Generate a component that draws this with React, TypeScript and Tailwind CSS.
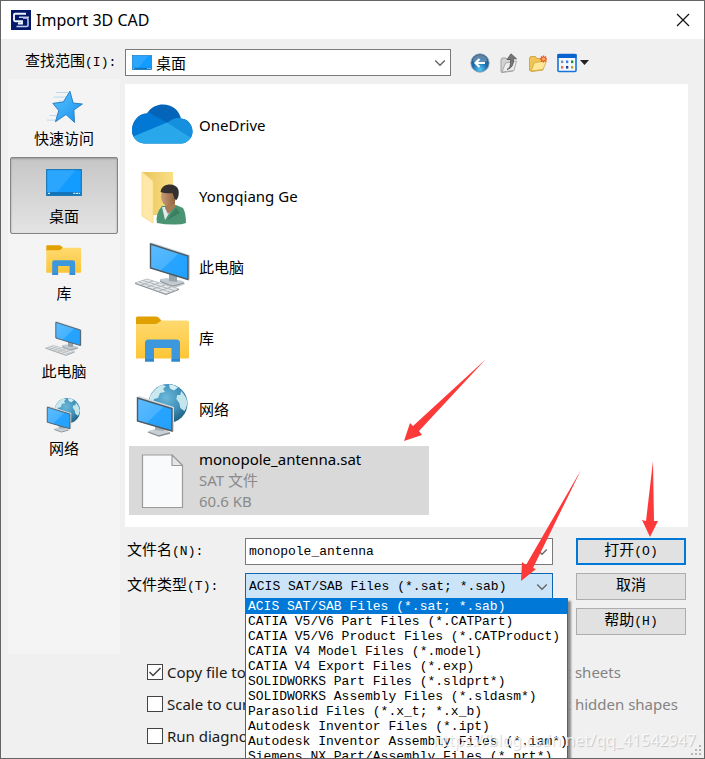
import { useState } from "react";
import type { ReactNode } from "react";

const UI = "font-['Noto_Sans','Noto_Sans_CJK_SC',sans-serif]";
const MONO = "font-['Liberation_Mono','Noto_Sans_CJK_SC',monospace]";

type IconProps = { className?: string };

function Screen({ points, id }: { points: string; id: string }) {
  return (
    <>
      <defs>
        <linearGradient id={id} x1="0" y1="0" x2="1" y2="1">
          <stop offset="0" stopColor="#5cbcff" />
          <stop offset="0.5" stopColor="#47b2ff" />
          <stop offset="0.52" stopColor="#26a4ff" />
          <stop offset="1" stopColor="#22a0fb" />
        </linearGradient>
      </defs>
      <polygon points={points} fill={`url(#${id})`} stroke="#4d5a63" strokeWidth="1.4" />
    </>
  );
}

function StarIcon({ className }: IconProps) {
  return (
    <svg viewBox="0 0 64 64" className={className} aria-hidden="true">
      <defs>
        <linearGradient id="star" x1="0" y1="0" x2="1" y2="1">
          <stop offset="0" stopColor="#5cc4ff" />
          <stop offset="1" stopColor="#1590ee" />
        </linearGradient>
      </defs>
      <path d="M20 13h18M16 20h20M24 26h10M10 48h12M6 55h14" stroke="#7fc0ea" strokeWidth="1.300" opacity=".6" />
      <path
        d="M41 11l5 18 14 1.500-13 9 1 19-13-12-16 11 5-17-9-11 16-2z"
        fill="url(#star)"
        stroke="#2a7fc0"
        strokeWidth="1.500"
        strokeLinejoin="round"
      />
    </svg>
  );
}

function DesktopIcon({ className }: IconProps) {
  return (
    <svg viewBox="5 12 54 41" className={className} aria-hidden="true" preserveAspectRatio="none">
      <rect x="6" y="13" width="52" height="39" fill="#139cff" stroke="#1878b8" strokeWidth="1.800" />
      <path d="M7 14h42L22 47H7z" fill="#3aaeff" opacity=".6" />
      <rect x="7" y="47" width="50" height="4.500" fill="#1173b8" />
      <path d="M8 49h3M46 49h3M50 49h3M54 49h2" stroke="#d8f0ff" strokeWidth="2" />
    </svg>
  );
}

function LibraryIcon({ className }: IconProps) {
  return (
    <svg viewBox="0 0 64 64" className={className} aria-hidden="true">
      <defs>
        <linearGradient id="lib" x1="0" y1="0" x2="0" y2="1">
          <stop offset="0" stopColor="#ffda70" />
          <stop offset="1" stopColor="#fdc536" />
        </linearGradient>
      </defs>
      <path d="M5 11q0-1.500 1.500-1.500h18q2 0 3 1l3 3-4 5H5z" fill="#e0a000" />
      <path d="M5 17h19q2 0 3-1l2-1.500q1-1 3-1h24q2 0 2 2V50q0 1.500-1.500 1.500h-51Q5 51.500 5 50z" fill="url(#lib)" />
      <path d="M14 54.500V36q0-3.500 3.500-3.500h28Q49 32.500 49 36v18.500h-8.500V41H23v13.500z" fill="#3d97dd" />
      <path d="M14 52h9v2.500h-9zM40.500 52H49v2.500h-8.500z" fill="#2f86ca" />
    </svg>
  );
}

function ComputerIcon({ className }: IconProps) {
  return (
    <svg viewBox="0 0 64 64" className={className} aria-hidden="true">
      <path d="M29 43l7-1 16 3 2 3-10 4q-4 0-7-2l-8-4z" fill="#c3cbd1" />
      <path d="M29 45l9 4q4 1.500 8 0l7-2" stroke="#8e979e" strokeWidth="1.200" fill="none" />
      <path d="M38 37l8 3v6l-8-1z" fill="#9aa4ab" />
      <path d="M19 7l2-.5L59 19v24l-1.500 1z" fill="#cdd5da" />
      <Screen id="pc" points="19.500,8 57,20 57,43.500 19.500,32" />
      <path d="M4 47l12-4 32 10-13 5z" fill="#e7eaec" stroke="#b4babe" strokeWidth=".9" />
      <path d="M8 46l31 10M12 44.500l31 10M10 49l12-4M16 51l12-4M22 53l12-4M28 55l12-4" stroke="#a9b0b5" strokeWidth=".9" />
      <path d="M4 47.500L35 58.500l13-5" stroke="#8c9499" strokeWidth="1" fill="none" />
    </svg>
  );
}

function NetworkIcon({ className }: IconProps) {
  return (
    <svg viewBox="0 0 64 64" className={className} aria-hidden="true">
      <defs>
        <radialGradient id="globe" cx=".45" cy=".35" r=".65">
          <stop offset="0" stopColor="#6cb8da" />
          <stop offset=".6" stopColor="#3f8fb8" />
          <stop offset="1" stopColor="#1f6384" />
        </radialGradient>
      </defs>
      <circle cx="37" cy="25.500" r="19.500" fill="url(#globe)" />
      <path d="M19 18q5-8 12-11l4 1-3 3 2 3-5 1-2 5-4 1-1 4-4-1z" fill="#c9e9ee" />
      <path d="M38 6.500q5 0 9 3l-4 3-4-2z" fill="#d5eef2" />
      <path d="M50 13q6 6 6.300 12-1 6-3 8l-4-3-1-5-3-4 1-4 3 0z" fill="#c3e6ec" />
      <path d="M28 50l-11 3 3 3 9 2 10-3-4-4z" fill="#c9d0d5" />
      <path d="M17 54l11 4 11-3" stroke="#858f96" strokeWidth="1.300" fill="none" />
      <path d="M24 46l9 3v4l-9-1z" fill="#a3adb4" />
      <path d="M6 19l2-1 35 11v24l-1.500 1z" fill="#d5dce0" />
      <Screen id="net" points="6.500,20 41,30.500 41,53 6.500,43" />
    </svg>
  );
}

function OneDriveIcon({ className }: IconProps) {
  return (
    <svg viewBox="0 0 64 64" className={className} aria-hidden="true">
      <defs>
        <clipPath id="cloud">
          <path d="M14 49.500A13 13 0 0 1 1 36.500C1 27 8 19.500 16 19.500C20 13 26 10.500 32 10.500C41 10.500 48 16 50 24.500C57 25 61.500 31 61.500 37.500A12 12 0 0 1 50 49.500Z" />
        </clipPath>
      </defs>
      <g clipPath="url(#cloud)">
        <rect width="64" height="64" fill="#0364b8" />
        <path d="M0 18h17l20 11L2 44H0z" fill="#0078d4" />
        <path d="M36 29q7-6 15-5l13 0v24z" fill="#1490df" />
        <path d="M0 43.500L36 28.500 60 44v8H0z" fill="#28a8ea" />
      </g>
    </svg>
  );
}

function UserFolderIcon({ className }: IconProps) {
  return (
    <svg viewBox="0 0 64 64" className={className} aria-hidden="true">
      <defs>
        <linearGradient id="uf" x1="0" y1="0" x2="1" y2="0">
          <stop offset="0" stopColor="#e9c45c" />
          <stop offset="1" stopColor="#fadf85" />
        </linearGradient>
        <linearGradient id="face" x1="0" y1="0" x2="1" y2="0">
          <stop offset="0" stopColor="#c99d78" />
          <stop offset="1" stopColor="#8a5f3c" />
        </linearGradient>
      </defs>
      <path d="M11 7h31v43H20z" fill="url(#uf)" />
      <path d="M11 7l11 9v42l-11-7z" fill="#ffe8a8" stroke="#f6d985" strokeWidth=".8" />
      <path d="M26 58q-2-9 5-17l14-1 7 3q3 5 3 15-5 2-13 1.500-8 0-16-1.500z" fill="#4a9473" />
      <path d="M31 42l3 13 8-13z" fill="#dfeaf0" />
      <path d="M36 55l9-12 4 5z" fill="#3a7f60" />
      <path d="M35 36h9v6l-7 7-3-6z" fill="#a97b54" />
      <ellipse cx="37.500" cy="31.500" rx="7.500" ry="9.500" fill="url(#face)" />
      <path d="M29.500 27q1-7 8-7.500 8-.5 10 5.500 1 6-2 10l-2-1q-1-4-2-6-7 1-12-1z" fill="#33302f" />
    </svg>
  );
}

function FileIcon({ className }: IconProps) {
  return (
    <svg viewBox="0 0 64 64" className={className} aria-hidden="true">
      <path d="M11.500 6h29.500l10.500 10.500v42h-40z" fill="#f9fafb" stroke="#9b9b9b" strokeWidth="1.200" />
      <path d="M41 6v10.500h10.500z" fill="#e6e6e6" stroke="#9b9b9b" strokeWidth="1.200" strokeLinejoin="round" />
    </svg>
  );
}

function Logo() {
  return (
    <svg viewBox="0 0 20 20" className="size-5" aria-hidden="true">
      <rect width="20" height="20" fill="#03186b" />
      <path d="M15 3.800H4.200Q3 3.800 3 5v5q0 1.200 1.200 1.200H11v2.300H7" fill="none" stroke="#f0f3fc" strokeWidth="1.900" />
      <path d="M18 7.200H8M12 8h3.500q1.500 0 1.500 1.300v6q0 1.200-1.300 1.200H5.500" fill="none" stroke="#c3cbe6" strokeWidth="1.600" />
    </svg>
  );
}

function BackIcon() {
  return (
    <svg viewBox="0 0 20 20" className="size-5" aria-hidden="true">
      <defs>
        <radialGradient id="back" cx=".5" cy=".85" r=".8">
          <stop offset="0" stopColor="#55c8f2" />
          <stop offset=".5" stopColor="#1d6fae" />
          <stop offset="1" stopColor="#2b5580" />
        </radialGradient>
      </defs>
      <circle cx="10" cy="10" r="9.200" fill="url(#back)" stroke="#8fa3b5" strokeWidth=".8" />
      <path d="M2.500 8a7.700 7.700 0 0 1 15 0q-7 3-15 0z" fill="#fff" opacity=".25" />
      <path d="M15 10H6M9.500 6L5.500 10l4 4" fill="none" stroke="#fff" strokeWidth="2.200" />
    </svg>
  );
}

function UpIcon() {
  return (
    <svg viewBox="0 0 20 20" className="size-5" aria-hidden="true">
      <path d="M2 7l1-2h4l1 1.500h6V18l-11 1.500q-1 0-1-1z" fill="#d2d2d2" stroke="#9a9a9a" strokeWidth=".9" />
      <path d="M3 19L6.500 10 17.500 8 15 17.500z" fill="#ececec" stroke="#a5a5a5" strokeWidth=".9" />
      <path d="M8 16.500q4-1 3.500-10H8L12 .8l5.500 5H14.500q.5 9-6.500 10.700z" fill="#777" stroke="#555" strokeWidth=".8" />
    </svg>
  );
}

function NewFolderIcon() {
  return (
    <svg viewBox="0 0 20 20" className="size-5" aria-hidden="true">
      <path d="M1.500 5l1-1.500h5L9 5.500h6V17l-11 1.500-2.500-1z" fill="#f0c556" stroke="#c99a35" strokeWidth=".8" />
      <path d="M3 18L6.500 9.500 18.500 8 15 16.500z" fill="#ffe796" stroke="#d3a63e" strokeWidth=".8" />
      <path d="M15.500 2.500v7M12 6h7M13 3.500l5 5M18 3.500l-5 5" stroke="#f0532d" strokeWidth="1.500" />
      <circle cx="15.500" cy="6" r="1.600" fill="#ffb45a" />
    </svg>
  );
}

function ViewIcon() {
  const dots: [number, number, string][] = [
    [5, 8, "#8c8cb0"], [10, 8, "#3b7fd0"], [15, 8, "#2a8a2a"],
    [5, 13.5, "#f07050"], [10, 13.5, "#2040a0"], [15, 13.5, "#c8a020"],
  ];
  return (
    <svg viewBox="0 0 32 20" className="h-5 w-8" aria-hidden="true">
      <rect x="1" y="1.500" width="18" height="17" rx="1" fill="#f4f9ff" stroke="#1a72d6" strokeWidth="1.600" />
      <rect x="0.500" y="1" width="19" height="4" fill="#0a64cf" />
      {dots.map(([x, y, c]) => (
        <rect key={`${x}-${y}`} x={x - 1} y={y - 0.5} width="2.300" height="2.600" fill={c} />
      ))}
      <path d="M23 7h9l-4.500 5z" fill="#222" />
    </svg>
  );
}

function Chevron() {
  return (
    <svg viewBox="0 0 12 8" className="pointer-events-none absolute top-1/2 right-[5px] h-2 w-3 -translate-y-1/2" aria-hidden="true">
      <path d="M1.200 1.500L6 6.200l4.800-4.700" fill="none" stroke="#666" strokeWidth="1.400" />
    </svg>
  );
}

const places = [
  { name: "快速访问", icon: <StarIcon className="size-[42px]" /> },
  { name: "桌面", icon: <span className="flex size-[42px] items-center justify-center"><DesktopIcon className="h-[27px] w-9" /></span> },
  { name: "库", icon: <LibraryIcon className="size-[42px]" /> },
  { name: "此电脑", icon: <ComputerIcon className="size-[42px]" /> },
  { name: "网络", icon: <NetworkIcon className="size-[42px]" /> },
];

const files: { name: string; icon: ReactNode; details?: string[] }[] = [
  { name: "OneDrive", icon: <OneDriveIcon className="size-16" /> },
  { name: "Yongqiang Ge", icon: <UserFolderIcon className="size-16" /> },
  { name: "此电脑", icon: <ComputerIcon className="size-16" /> },
  { name: "库", icon: <LibraryIcon className="size-16" /> },
  { name: "网络", icon: <NetworkIcon className="size-16" /> },
  { name: "monopole_antenna.sat", icon: <FileIcon className="size-16" />, details: ["SAT 文件", "60.6 KB"] },
];

const fileTypes = [
  "ACIS SAT/SAB Files (*.sat; *.sab)",
  "CATIA V5/V6 Part Files (*.CATPart)",
  "CATIA V5/V6 Product Files (*.CATProduct)",
  "CATIA V4 Model Files (*.model)",
  "CATIA V4 Export Files (*.exp)",
  "SOLIDWORKS Part Files (*.sldprt*)",
  "SOLIDWORKS Assembly Files (*.sldasm*)",
  "Parasolid Files (*.x_t; *.x_b)",
  "Autodesk Inventor Files (*.ipt)",
  "Autodesk Inventor Assembly Files (*.iam*)",
  "Siemens NX Part/Assembly Files (*.prt*)",
];

function Mnemonic({ text, keyName, colon }: { text: string; keyName?: string; colon?: boolean }) {
  return (
    <>
      {text}
      {keyName && <span className="text-[13px]">({keyName}){colon && ":"}</span>}
    </>
  );
}

function Check({ label, checked, disabled }: { label: string; checked?: boolean; disabled?: boolean }) {
  return (
    <label className={`flex h-8 items-center gap-1 whitespace-nowrap ${disabled ? "text-[#838383]" : "text-[#1a1a1a]"}`}>
      <span className="grid size-4">
        <input
          type="checkbox"
          defaultChecked={checked}
          disabled={disabled}
          className="peer col-start-1 row-start-1 size-4 appearance-none border border-[#444] bg-white"
        />
        <svg viewBox="0 0 16 16" className="pointer-events-none invisible col-start-1 row-start-1 size-4 peer-checked:visible" aria-hidden="true">
          <path d="M2.500 8l3.500 3.500 7.500-7.500" fill="none" stroke="#444" strokeWidth="1.500" />
        </svg>
      </span>
      {label}
    </label>
  );
}

function Arrows() {
  return (
    <svg viewBox="1 1 705 600" width="705" height="600" className="pointer-events-none absolute top-0 left-0 z-20 max-w-none" aria-hidden="true">
      <g fill="#fd3a3a">
        <polygon points="486,359 413,426 410,423 404,441 422,435 419,431" />
        <polygon points="581,470 526,565 522,562 521,581 536,569 533,568" />
        <polygon points="653,461 646,521 642,520 650,537 658,521 654,521" />
      </g>
    </svg>
  );
}

export default function App() {
  const [type, setType] = useState(fileTypes[0]);
  const [place, setPlace] = useState("桌面");
  const button = "h-[27px] w-[110px] bg-[#e1e1e1] text-[15px] leading-5 text-black";

  return (
    <div className={`relative min-h-screen overflow-hidden border border-[#646464] bg-[#f0f0f0] text-[15px] leading-5 text-black ${UI}`}>
      <header className="flex h-[38px] items-center gap-[5px] bg-white pr-[11px] pl-2.5">
        <Logo />
        <h1 className="flex-1 text-base leading-5">Import 3D CAD</h1>
        <button aria-label="Close" className="flex size-5 items-center justify-center">
          <svg viewBox="0 0 14 14" className="size-3.5" aria-hidden="true">
            <path d="M1 1l12 12M13 1L1 13" stroke="#111" strokeWidth="1.200" />
          </svg>
        </button>
      </header>

      <div className="flex items-center pt-[10px] pl-6">
        <label htmlFor="look-in" className={`w-[100px] ${MONO}`}>
          <Mnemonic text="查找范围" keyName="I" colon />
        </label>
        <div className="relative w-[326px]">
          <DesktopIcon className="pointer-events-none absolute top-1.5 left-[7px] h-[15px] w-5" />
          <select id="look-in" className="block h-[27px] w-full appearance-none border border-[#7a7a7a] bg-white pl-[30px] text-[15px] leading-5">
            <option>桌面</option>
          </select>
          <Chevron />
        </div>
        <div className="flex gap-[9px] pl-[19px]">
          <button aria-label="Back"><BackIcon /></button>
          <button aria-label="Up one level"><UpIcon /></button>
          <button aria-label="New folder"><NewFolderIcon /></button>
          <button aria-label="View"><ViewIcon /></button>
        </div>
      </div>

      <div className="flex gap-[5px] pt-[3px] pr-4 pl-[7px]">
        <nav className="h-[575px] w-28 shrink-0 bg-[#f4f4f4] px-0.5">
          <div className="flex h-[388px] flex-col">
            {places.map((p) => (
              <button
                key={p.name}
                onClick={() => setPlace(p.name)}
                className={`flex flex-1 flex-col items-center gap-0.5 rounded-xs border pt-1 ${
                  place === p.name
                    ? "border-[#858585] bg-linear-to-b from-[#c6c6c6] to-[#e4e4e4] shadow-[inset_0_1px_2px_#999]"
                    : "border-transparent"
                }`}
              >
                {p.icon}
                <span>{p.name}</span>
              </button>
            ))}
          </div>
        </nav>

        <main className="min-w-0 flex-1 pt-[5px]">
          <ul className="flex flex-col gap-0.5 bg-white pt-[7px] pb-3 pl-1">
            {files.map((f) => (
              <li key={f.name} className={`flex h-[69px] w-[300px] items-center gap-1 pl-0.5 ${f.details ? "bg-[#d9d9d9]" : ""}`}>
                {f.icon}
                <div className="leading-[21px]">
                  <div>{f.name}</div>
                  {f.details?.map((d) => (
                    <div key={d} className="text-[#8a8a8a]">{d}</div>
                  ))}
                </div>
              </li>
            ))}
          </ul>

          <div className="flex justify-between pt-[11px] pr-0.5">
            <div className="grid flex-1 grid-cols-[120px_308px] content-start items-center gap-y-2">
              <label htmlFor="file-name" className={`pl-0.5 ${MONO}`}>
                <Mnemonic text="文件名" keyName="N" colon />
              </label>
              <div className="relative">
                <input id="file-name" defaultValue="monopole_antenna" className={`block h-[27px] w-full border border-[#7a7a7a] bg-white px-[3px] text-[13px] ${MONO}`} />
                <Chevron />
              </div>
              <label htmlFor="file-type" className={`pl-0.5 ${MONO}`}>
                <Mnemonic text="文件类型" keyName="T" colon />
              </label>
              <div className="relative">
                <select
                  id="file-type"
                  value={type}
                  onChange={(e) => setType(e.target.value)}
                  className={`block h-[27px] w-full appearance-none border border-[#0f66b0] bg-[#cce4f7] px-[3px] text-[13px] ${MONO}`}
                >
                  {fileTypes.map((t) => <option key={t}>{t}</option>)}
                </select>
                <Chevron />
                <ul role="listbox" aria-label="文件类型" className={`absolute top-[25px] left-0 z-10 h-[240px] w-[323px] border border-[#0078d7] bg-white text-[13px] leading-[15px] shadow-[3px_3px_2px_#8a8a8a] ${MONO}`}>
                  {fileTypes.map((t) => (
                    <li
                      key={t}
                      role="option"
                      aria-selected={t === type}
                      onClick={() => setType(t)}
                      className={`pl-0.5 whitespace-nowrap ${t === type ? "bg-[#0078d7] text-white" : ""}`}
                    >
                      {t}
                    </li>
                  ))}
                </ul>
              </div>
            </div>
            <div className={`flex flex-col gap-2 ${MONO}`}>
              <button className={`${button} border-2 border-[#0078d7]`}><Mnemonic text="打开" keyName="O" /></button>
              <button className={`${button} border border-[#adadad]`}>取消</button>
              <button className={`${button} border border-[#adadad]`}><Mnemonic text="帮助" keyName="H" /></button>
            </div>
          </div>

          <div className="flex h-[100px] items-start gap-[205px] pt-[21px] pl-[22px]">
            <div className="w-[150px]">
              <Check label="Copy file to project" checked />
              <Check label="Scale to current unit" />
              <Check label="Run diagnostics" />
            </div>
            <div>
              <Check label="Import sheets" disabled />
              <Check label="Import hidden shapes" disabled />
            </div>
          </div>
        </main>
      </div>

      <Arrows />
      <div className="pointer-events-none absolute right-2 bottom-1.5 z-20 text-base text-white/75 [text-shadow:1px_1px_1px_#0000002e]">
        https://blog.csdn.net/qq_41542947
      </div>
      <svg viewBox="0 0 12 12" className="absolute right-0.5 bottom-0.5 size-3" fill="#b5b5b5" aria-hidden="true">
        <path d="M9 1h2v2H9zM9 5h2v2H9zM9 9h2v2H9zM5 5h2v2H5zM5 9h2v2H5zM1 9h2v2H1z" />
      </svg>
    </div>
  );
}
